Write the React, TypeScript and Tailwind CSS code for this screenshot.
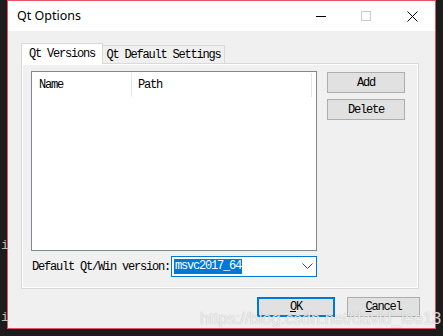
import React from "react";

const mono = { fontFamily: '"Liberation Mono", "DejaVu Sans Mono", monospace' };

function Btn({ w, h, children, focused }: { w: number; h: number; children: React.ReactNode; focused?: boolean }) {
  return (
    <div
      className={
        "flex items-center justify-center bg-[#e1e1e1] text-[12px] tracking-[-1.2px] text-black " +
        (focused ? "border-2 border-[#0078d7]" : "border border-[#adadad]")
      }
      style={{ width: w, height: h, ...mono }}
    >
      {children}
    </div>
  );
}

export default function App() {
  return (
    <div className="relative w-[443px] h-[336px] overflow-hidden bg-[#1c1c1c] flex">
      <div className="ml-[7px] w-[429px] h-[329px] border border-[#e5535f] flex flex-col bg-[#f0f0f0]">
        {/* Title bar */}
        <div className="h-[30px] bg-white flex items-center">
          <div className="pl-[9px] flex-1 text-[12.5px] text-black" style={{ fontFamily: '"Noto Sans", "Open Sans", sans-serif' }}>
            Qt Options
          </div>
          <div className="w-[46px] h-[30px] flex items-center justify-center">
            <div className="w-[10px] h-px bg-black ml-[2px]" />
          </div>
          <div className="w-[46px] h-[30px] flex items-center justify-center">
            <div className="w-[10px] h-[10px] border border-[#cccccc]" />
          </div>
          <div className="w-[46px] h-[30px] flex items-center justify-center">
            <svg width="11" height="11" viewBox="0 0 11 11">
              <path d="M0.5 0.5 L10.5 10.5 M10.5 0.5 L0.5 10.5" stroke="#000" strokeWidth="1" fill="none" />
            </svg>
          </div>
        </div>

        {/* Body */}
        <div className="flex-1 flex flex-col pt-[12px] pl-[13px]">
          {/* Tabs */}
          <div className="flex items-end h-[20px]" style={mono}>
            <div className="relative z-10 -mb-px w-[82px] h-[21px] bg-white border-l border-t border-r border-[#d9d9d9] flex items-center justify-center text-[12px] tracking-[-1.2px] text-black">
              Qt Versions
            </div>
            <div className="-ml-px w-[123px] h-[18px] bg-[#f0f0f0] border-l border-t border-r border-[#d9d9d9] flex items-center justify-center text-[12px] tracking-[-1.2px] text-black pt-[1px]">
              Qt Default Settings
            </div>
          </div>

          {/* Pane */}
          <div className="w-[398px] h-[226px] border border-[#d9d9d9] shadow-[inset_1px_1px_0_#ffffff,inset_-1px_-1px_0_#ffffff] bg-[#f0f0f0] pt-[7px] pl-[9px] flex flex-col">
            <div className="flex">
              <div className="w-[286px] h-[180px] border border-[#828790] bg-white flex flex-col">
                <div className="h-[25px] flex items-stretch pt-px text-[12px] tracking-[-1.2px] text-black" style={mono}>
                  <div className="w-[100px] flex items-center pl-[7px] border-r border-[#e5e5e5]">Name</div>
                  <div className="w-[180px] flex items-center pl-[6px] border-r border-[#e5e5e5]">Path</div>
                </div>
              </div>
              <div className="ml-[10px] mt-[1px] flex flex-col gap-[6px]">
                <Btn w={78} h={21}>Add</Btn>
                <Btn w={78} h={21}>Delete</Btn>
              </div>
            </div>
            <div className="mt-[5px] flex items-center">
              <div className="w-[140px] pl-[1px] text-[12px] tracking-[-1.2px] text-black whitespace-nowrap" style={mono}>
                Default Qt/Win version:
              </div>
              <div className="w-[146px] h-[21px] border border-[#0078d7] bg-white flex items-center pl-[2px] pr-[3px]">
                <span className="bg-[#0078d7] text-white text-[12px] tracking-[-1.2px] px-px leading-[15px]" style={mono}>
                  msvc2017_64
                </span>
                <div className="flex-1" />
                <svg width="11" height="7" viewBox="0 0 11 7">
                  <path d="M0.5 0.5 L5.5 5.5 L10.5 0.5" stroke="#444" strokeWidth="1" fill="none" />
                </svg>
              </div>
            </div>
          </div>

          {/* Bottom buttons */}
          <div className="mt-[8px] flex justify-end gap-[12px] pr-[15px]">
            <Btn w={78} h={20} focused>
              <span><u>O</u>K</span>
            </Btn>
            <Btn w={73} h={20}>
              <span><u>C</u>ancel</span>
            </Btn>
          </div>
        </div>
      </div>

      {/* left-edge text fragments */}
      <div className="absolute left-[1px] top-[236px] text-[13px] text-[#bdbdbd]" style={mono}>i</div>
      <div className="absolute left-[1px] top-[308px] text-[13px] text-[#bdbdbd]" style={mono}>i</div>

      {/* watermark */}
      <div
        className="absolute left-[200px] top-[306px] text-[16.5px] text-white/80 whitespace-nowrap [text-shadow:0_0_1px_rgba(0,0,0,0.35)]"
        style={{ fontFamily: '"Liberation Sans", Arial, sans-serif' }}
      >
        https://blog.csdn.net/david_lee13
      </div>
    </div>
  );
}
